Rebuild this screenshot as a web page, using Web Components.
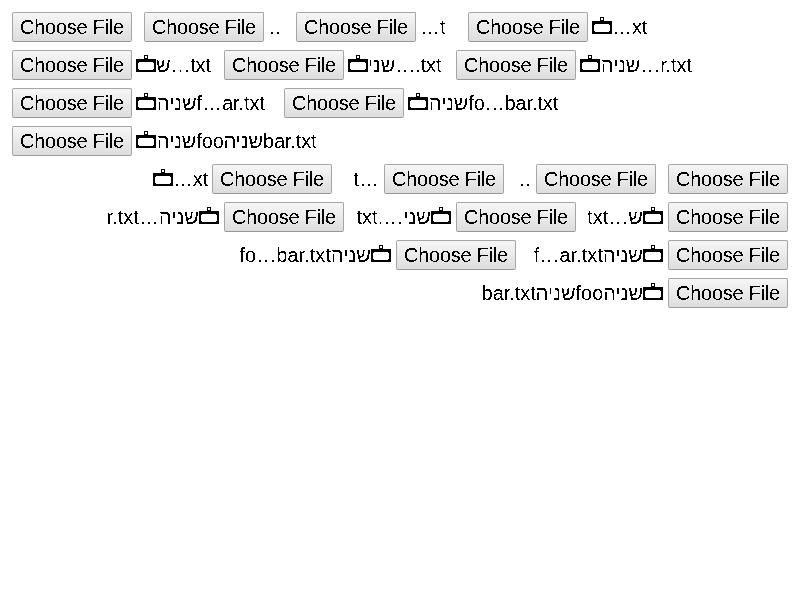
<!DOCTYPE html>
<html lang="en"><head><meta charset="utf-8"><title>File inputs</title>
<style>body{margin:0;background:#fff;color:#000;font:20px "Liberation Sans",Arial,sans-serif}</style></head>
<body><file-sheet></file-sheet>
<script>
const crisp = '<svg width="0" height="0" style="position:absolute"><filter id="crisp" x="0" y="0" width="1" height="1" color-interpolation-filters="sRGB"><feComponentTransfer><feFuncA type="discrete" tableValues="0 1"/></feComponentTransfer></filter></svg>';
class FileField extends HTMLElement {
  connectedCallback() {
    this.attachShadow({mode:'open'}).innerHTML = `<style>
      :host{display:flex;gap:4px;height:30px;flex:none;width:var(--w)}
      .button{box-sizing:border-box;width:120px;height:30px;flex:none;border:1px solid #a6a6a6;border-bottom-color:#999;border-radius:2px;background:linear-gradient(#f6f6f6,#dddddd);direction:ltr;padding-left:7px;line-height:28px;white-space:nowrap}
      .button span{display:block;width:110px;filter:url(#crisp);letter-spacing:-.25px}
      .name{flex:1;min-width:0;max-width:var(--clip,none);padding-right:var(--inset,0);overflow:hidden;white-space:nowrap;line-height:30px;filter:url(#crisp);letter-spacing:var(--track)}
    </style>${crisp}<div class="button"><span>Choose File</span></div><div class="name"><slot></slot></div>`;
  }
}
class CaseGlyph extends HTMLElement {
  connectedCallback() {
    this.attachShadow({mode:'open'}).innerHTML = `<style>:host{display:inline-block;width:20px;height:17px;margin-right:var(--after,0);vertical-align:baseline}svg{display:block}</style>
    <svg width="20" height="17" shape-rendering="crispEdges"><path fill="#000" fill-rule="evenodd" d="M0 4H8V0H12V4H20V17H0ZM9 1V3H11V1ZM2 8H3V7H17V8H18V14H17V15H3V14H2Z"/></svg>`;
  }
}
class FileRow extends HTMLElement {
  connectedCallback() {
    this.attachShadow({mode:'open'}).innerHTML = `<style>:host{display:flex;gap:12px;height:30px}</style><slot></slot>`;
  }
}
class FileSheet extends HTMLElement {
  connectedCallback() {
    const g = '<case-glyph></case-glyph>';
    const rows = [
      [[120,''],[140,'…'],[160,'…t'],[180,`<span dir="ltr">${g}…xt</span>`]],
      [[200,g+'ש…txt'],[220,g+'שני….txt'],[240,g+'שניה…r.txt']],
      [[260,g+'שניהf…ar.txt'],[280,g+'שניהfo…bar.txt']],
      [[400,g+'שניהfooשניהbar.txt']]];
    const style = (dir, w) => {
      const s = [`--w:${w}px`];
      if (w === 140) s.push('--clip:13px');
      if (dir === 'ltr') {
        s.push(`--track:${w === 200 ? -.2 : w === 260 ? -.08 : w >= 240 ? -.14 : -.1}px`);
        if (w >= 240) s.push('--after:1px');
      } else {
        s.push(`--track:${w === 180 ? -.2 : w === 400 ? -.03 : .04}px`);
        if (w > 140 && w !== 180) s.push('--inset:1px');
      }
      return s.join(';');
    };
    const draw = dir => rows.map(r => `<file-row dir="${dir}">${r.map(([w,n]) => `<file-field style="${style(dir, w)}">${n}</file-field>`).join('')}</file-row>`).join('');
    this.attachShadow({mode:'open'}).innerHTML = `<style>:host{display:flex;flex-direction:column;gap:8px;padding:12px}</style>${draw('ltr')}${draw('rtl')}`;
  }
}
customElements.define('case-glyph',CaseGlyph);
customElements.define('file-field',FileField);
customElements.define('file-row',FileRow);
customElements.define('file-sheet',FileSheet);
</script></body></html>
